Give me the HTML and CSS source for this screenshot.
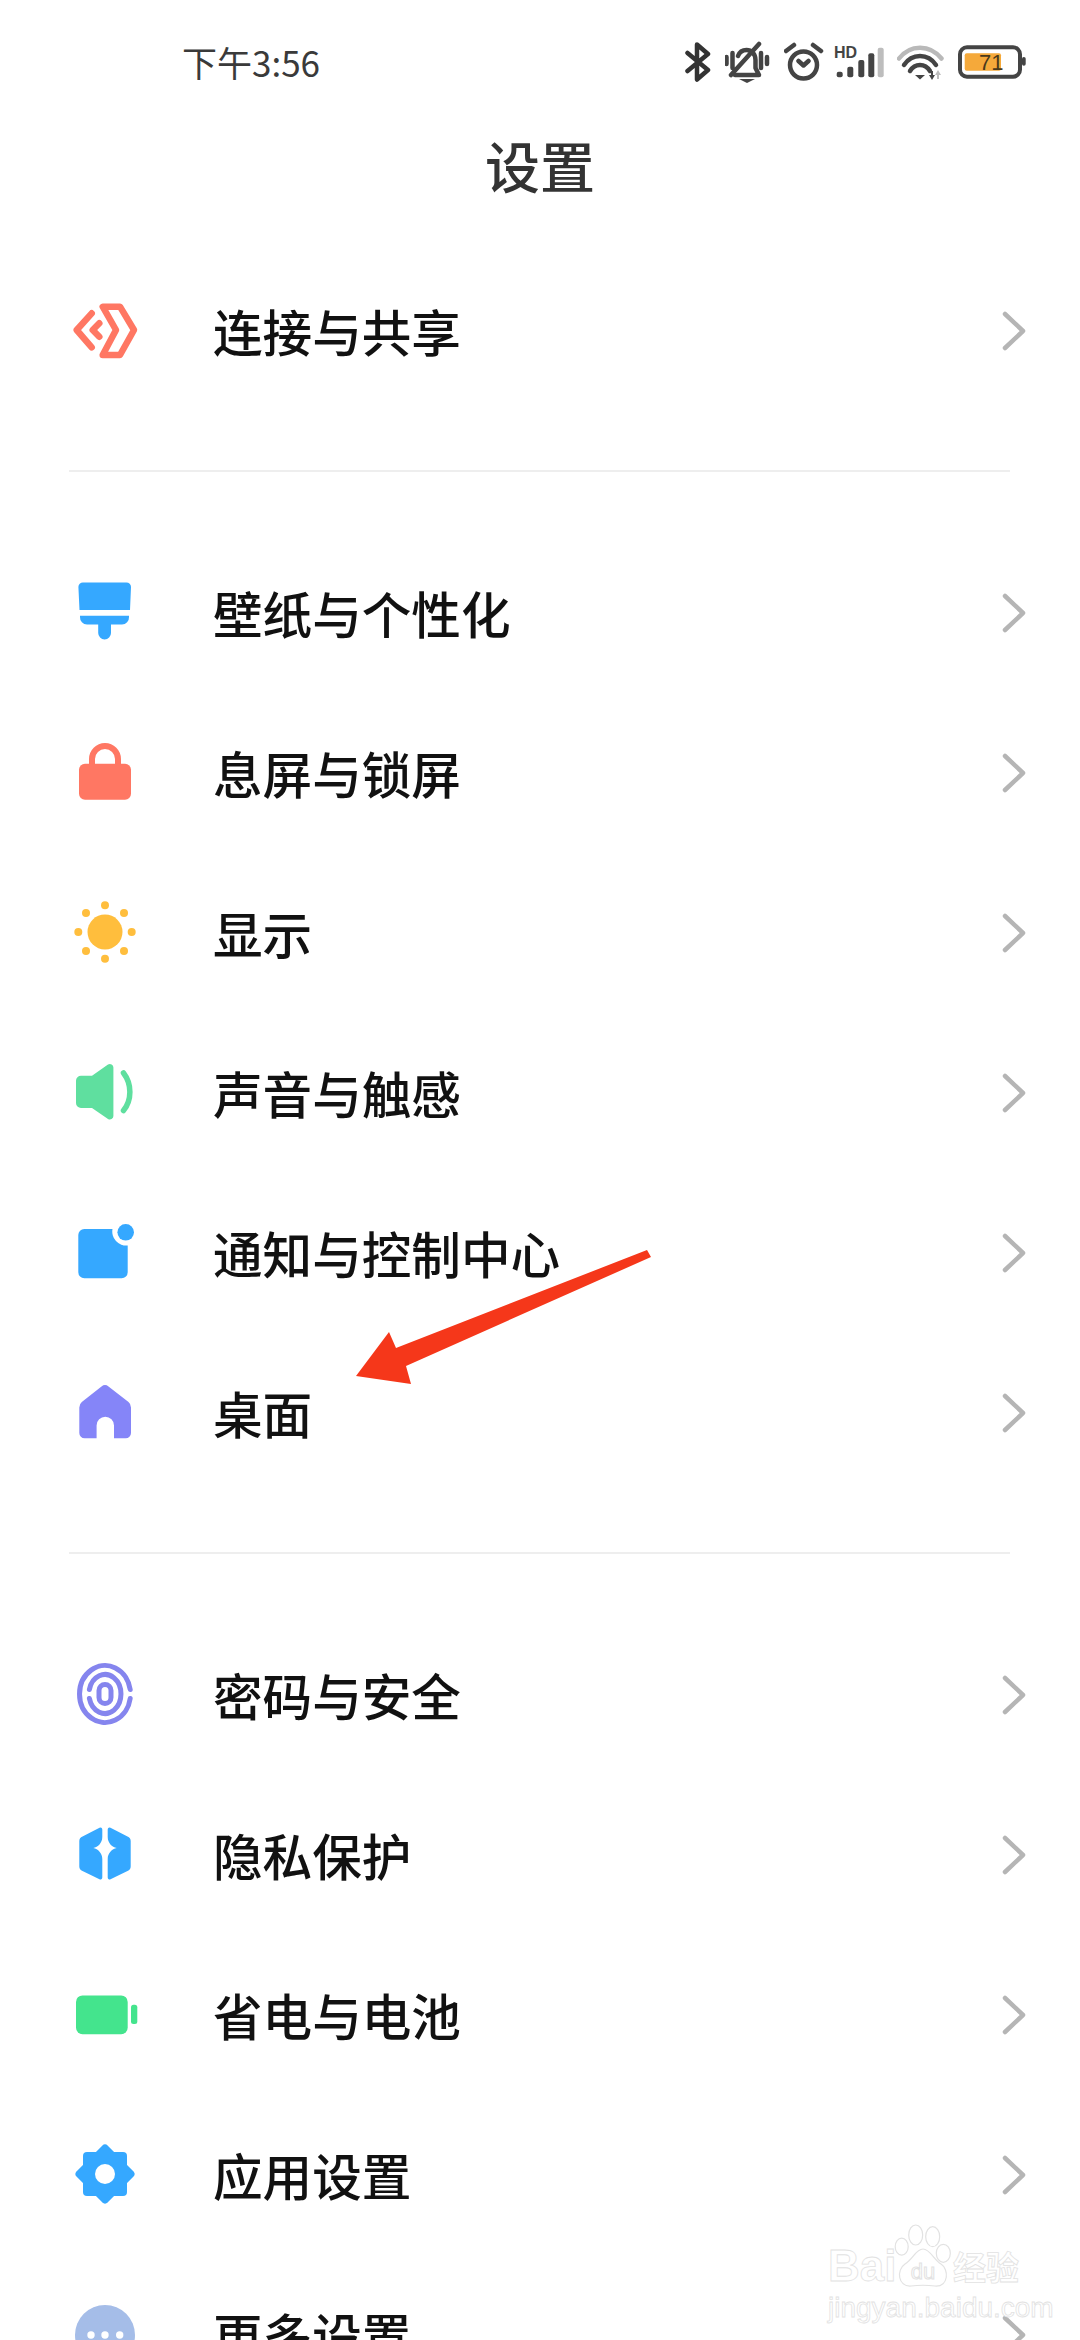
FILE: index.html
```html
<!DOCTYPE html>
<html lang="zh-CN">
<head>
  <meta charset="UTF-8" />
  <meta name="viewport" content="width=device-width,initial-scale=1.0" />
  <title>设置</title>
  <link rel="stylesheet" href="styles.css">
</head>
<body>
  <div class="phone">
    <!-- status bar -->
    <div class="status-bar">
      <span class="time">下午3:56</span>
      <div class="status-icons">
        <svg class="st st-bt" viewBox="0 0 30 44"><path class="ln" d="M2.500 13L23 30 12 39.500V4.500L23 14 2.500 31"/></svg>
        <svg class="st st-bell" viewBox="0 0 49 44">
          <path class="ln3" d="M1.500 17v7M7.500 13v15M36 13v15M42 17v7M34 4L6 35"/>
          <path class="ln3" d="M10 35h24l-3.500-7v-8c0-6-4-10-9-10-4 0-7 2-8.500 6"/>
          <path class="fl" d="M14 39h16l-8 4z"/>
        </svg>
        <svg class="st st-alarm" viewBox="0 0 40 44">
          <circle class="ln3" cx="19.500" cy="25" r="13.500"/>
          <path class="ln3" d="M2 11l8-6M29 5l8 6M14.500 21l5 4.500 5-4.500"/>
        </svg>
        <svg class="st st-signal" viewBox="0 0 53 44">
          <text class="hd" x="0" y="18">HD</text>
          <rect class="fl" x="2.700" y="31.700" width="6" height="5.600" rx="2"/>
          <rect class="fl" x="13.300" y="26.700" width="6" height="10.600" rx="2"/>
          <rect class="fl" x="24.300" y="20" width="6" height="17.300" rx="2"/>
          <rect class="fl" x="34.300" y="13.300" width="6" height="24" rx="2"/>
          <rect class="fl-off" x="43.700" y="7.700" width="6" height="29.600" rx="2"/>
        </svg>
        <svg class="st st-wifi" viewBox="0 0 51 44">
          <path class="ln-off" d="M2 18.500C13 4 33 4 44.500 18.500"/>
          <path class="ln3" d="M7 25C15 13 31 13 39 25M13 31C18 23 28 23 33 31"/>
          <path class="fl" d="M18 35h10l-5 4.500z"/>
          <path class="fl" d="M34 31h2v4h2l-3 5-3-5h2z"/>
          <path class="fl-off" d="M40 39v-4h-2l3-5 3 5h-2v4z"/>
        </svg>
        <svg class="st st-batt" viewBox="0 0 70 44">
          <rect class="batt-box" x="2" y="7.300" width="60" height="29.400" rx="7"/>
          <rect class="batt-lvl" x="6.700" y="13.300" width="36.300" height="17.400" rx="2"/>
          <rect class="fl" x="64" y="17" width="3.700" height="8.700" rx="1.800"/>
          <text class="batt-num" x="21" y="30">71</text>
        </svg>
      </div>
    </div>

    <h1 class="page-title">设置</h1>

    <div class="list">
      <div class="group">
        <div class="row">
          <svg class="ico" viewBox="0 0 80 80">
            <path class="s-coral" d="M26.700 22.300L11.700 39l15 17.300M34.300 32.300L27.700 39l6.600 6.700"/>
            <path class="s-coral" d="M37.700 15.700H55L69 39 55 64H37.700L51 39z"/>
          </svg>
          <span class="label">连接与共享</span>
          <svg class="chev" viewBox="0 0 24 40"><path d="M3 3l18 17L3 37"/></svg>
        </div>
      </div>
      <div class="divider"></div>
      <div class="group">
        <div class="row">
          <svg class="ico" viewBox="0 0 80 80">
            <path class="blue" d="M18 9.400H61.500a4.500 4.500 0 0 1 4.500 4.600L65 37H14.500L13.400 14a4.500 4.500 0 0 1 4.600-4.600z"/>
            <path class="blue" d="M15 42.700H64V44a7 7 0 0 1-7 7.400H46V60a6.400 6.400 0 0 1-12.800 0V51.400H22a7 7 0 0 1-7-7.400z"/>
          </svg>
          <span class="label">壁纸与个性化</span>
          <svg class="chev" viewBox="0 0 24 40"><path d="M3 3l18 17L3 37"/></svg>
        </div>
        <div class="row">
          <svg class="ico" viewBox="0 0 80 80">
            <path class="shackle" d="M27 33V26a13 13 0 0 1 26 0V33"/>
            <rect class="coral" x="14" y="30.700" width="52" height="36" rx="6"/>
          </svg>
          <span class="label">息屏与锁屏</span>
          <svg class="chev" viewBox="0 0 24 40"><path d="M3 3l18 17L3 37"/></svg>
        </div>
        <div class="row">
          <svg class="ico" viewBox="0 0 80 80">
            <g class="sun">
              <circle cx="40" cy="39" r="17.500"/>
              <circle cx="40" cy="12.300" r="4"/><circle cx="40" cy="65.700" r="4"/>
              <circle cx="13.300" cy="39" r="4"/><circle cx="66.700" cy="39" r="4"/>
              <circle cx="21" cy="20" r="4"/><circle cx="59" cy="20" r="4"/>
              <circle cx="21" cy="58" r="4"/><circle cx="59" cy="58" r="4"/>
            </g>
          </svg>
          <span class="label">显示</span>
          <svg class="chev" viewBox="0 0 24 40"><path d="M3 3l18 17L3 37"/></svg>
        </div>
        <div class="row">
          <svg class="ico" viewBox="0 0 80 80">
            <path class="mint" d="M16 22.700H27L43 11.500a3.500 3.500 0 0 1 5.400 3V63a3.500 3.500 0 0 1-5.400 3L27 55H16a5 5 0 0 1-5-5V27.700a5 5 0 0 1 5-5z"/>
            <path class="s-mint" d="M58.500 20C67 31 67 47 58.500 57.500"/>
          </svg>
          <span class="label">声音与触感</span>
          <svg class="chev" viewBox="0 0 24 40"><path d="M3 3l18 17L3 37"/></svg>
        </div>
        <div class="row">
          <svg class="ico" viewBox="0 0 80 80">
            <path class="blue" d="M19.300 16H47.500A14 14 0 0 0 62.700 32.500V59.300a6 6 0 0 1-6 6H19.300a6 6 0 0 1-6-6V22a6 6 0 0 1 6-6z"/>
            <circle class="blue" cx="60.700" cy="19.300" r="8.300"/>
          </svg>
          <span class="label">通知与控制中心</span>
          <svg class="chev" viewBox="0 0 24 40"><path d="M3 3l18 17L3 37"/></svg>
        </div>
        <div class="row">
          <svg class="ico" viewBox="0 0 80 80">
            <path class="violet" d="M36.500 13.500a5.500 5.500 0 0 1 7 0L63.500 29a7 7 0 0 1 2.500 5.500V60a5.300 5.300 0 0 1-5.300 5.300H49V52.500a8.700 8.700 0 0 0-17.400 0V65.300H19.600a5.300 5.300 0 0 1-5.300-5.300V34.500a7 7 0 0 1 2.500-5.500z"/>
          </svg>
          <span class="label">桌面</span>
          <svg class="chev" viewBox="0 0 24 40"><path d="M3 3l18 17L3 37"/></svg>
        </div>
      </div>
      <div class="divider"></div>
      <div class="group">
        <div class="row">
          <svg class="ico" viewBox="0 0 80 80">
            <g class="s-violet">
              <path d="M65.200 34.500A25.500 28.500 0 1 0 65.200 43.500"/>
              <path d="M24.400 34.500A16 19.500 0 1 1 24.400 43.500"/>
              <rect x="34" y="29.500" width="12" height="19" rx="6"/>
            </g>
          </svg>
          <span class="label">密码与安全</span>
          <svg class="chev" viewBox="0 0 24 40"><path d="M3 3l18 17L3 37"/></svg>
        </div>
        <div class="row">
          <svg class="ico" viewBox="0 0 80 80">
            <path class="blue" d="M34.500 12.700a2 2 0 0 1 2.800 1.800V22C37.300 28 33 32 28.300 33 33 34 37.300 38 37.300 44V62.500a2 2 0 0 1-2.800 1.800L17.500 56a5 5 0 0 1-3.200-4.600V26a5 5 0 0 1 3.200-4.600z"/>
            <path class="blue" d="M45.500 12.700a2 2 0 0 0-2.800 1.800V22C42.700 28 47 32 51.700 33 47 34 42.700 38 42.700 44V62.500a2 2 0 0 0 2.800 1.800L62.500 56a5 5 0 0 0 3.200-4.600V26a5 5 0 0 0-3.200-4.600z"/>
          </svg>
          <span class="label">隐私保护</span>
          <svg class="chev" viewBox="0 0 24 40"><path d="M3 3l18 17L3 37"/></svg>
        </div>
        <div class="row">
          <svg class="ico" viewBox="0 0 80 80">
            <rect class="green" x="11" y="20.400" width="51.700" height="38.800" rx="6.500"/>
            <rect class="green" x="66" y="29.700" width="6.300" height="19.300" rx="2.500"/>
          </svg>
          <span class="label">省电与电池</span>
          <svg class="chev" viewBox="0 0 24 40"><path d="M3 3l18 17L3 37"/></svg>
        </div>
        <div class="row">
          <svg class="ico" viewBox="0 0 80 80">
            <rect class="blue" x="18" y="17" width="44" height="44" rx="4"/>
            <rect class="blue" x="18" y="17" width="44" height="44" rx="4" transform="rotate(45 40 39)"/>
            <circle class="hole" cx="40" cy="39" r="10"/>
          </svg>
          <span class="label">应用设置</span>
          <svg class="chev" viewBox="0 0 24 40"><path d="M3 3l18 17L3 37"/></svg>
        </div>
        <div class="row">
          <svg class="ico" viewBox="0 0 80 80">
            <circle class="grey-blue" cx="40" cy="40" r="30"/>
            <circle class="hole" cx="26" cy="40" r="3.700"/>
            <circle class="hole" cx="40" cy="40" r="3.700"/>
            <circle class="hole" cx="54.700" cy="40" r="3.700"/>
          </svg>
          <span class="label">更多设置</span>
          <svg class="chev" viewBox="0 0 24 40"><path d="M3 3l18 17L3 37"/></svg>
        </div>
      </div>
    </div>

    <!-- annotation arrow drawn over the list -->
    <svg class="arrow" viewBox="0 0 300 140">
      <path d="M291 0L295 7 50 116 55 134 0 126 33 82 40 98z"/>
    </svg>

    <!-- watermark -->
    <div class="watermark">
      <div class="wm-top">
        <span class="wm-bai">Bai</span>
        <svg class="wm-paw" viewBox="0 0 60 68">
          <ellipse cx="8.700" cy="24.700" rx="6.500" ry="8.500"/>
          <ellipse cx="22.700" cy="13" rx="7" ry="10"/>
          <ellipse cx="39.700" cy="14.700" rx="7" ry="10"/>
          <ellipse cx="50.300" cy="31.300" rx="7" ry="9"/>
          <path d="M30 27C37 27 41 38 48 42 56 47 56 65 42 64 34 63 26 63 18 64 5 65 3 48 12 42 20 37 23 27 30 27z"/>
          <text x="30" y="57">du</text>
        </svg>
        <span class="wm-jy">经验</span>
      </div>
      <div class="wm-url">jingyan.baidu.com</div>
    </div>
  </div>
</body>
</html>
```

FILE: styles.css
```css
html,body{margin:0;width:1080px;height:2340px;overflow:hidden;background:#fff}
body {
  font-family: "Noto Sans CJK SC", "Noto Sans", sans-serif;
}
.phone {
  position: relative;
  width: 1080px;
  height: 2340px;
  overflow: hidden;
  background: #fff;
}

/* Status bar */
.status-bar {
  height: 124px;
  display: flex;
  align-items: center;
  justify-content: space-between;
  padding: 0 52px 0 182px;
}
.time {
  font-size: 35px;
  color: #3a3a3a;
  margin-bottom: 2px;
}
.status-icons {
  display: flex;
  align-items: center;
  gap: 10px;
}
.st { height: 44px; display: block; }
.st-bt { width: 30px; }
.st-bell { width: 49px; }
.st-alarm { width: 40px; }
.st-signal { width: 53px; }
.st-wifi { width: 51px; }
.st-batt { width: 70px; }
.ln { fill: none; stroke: #333; stroke-width: 4.5; stroke-linecap: round; stroke-linejoin: round; }
.ln3 { fill: none; stroke: #444; stroke-width: 4.5; stroke-linecap: round; stroke-linejoin: round; }
.ln-off { fill: none; stroke: #b9b9b9; stroke-width: 4.5; stroke-linecap: round; }
.fl { fill: #444; }
.fl-off { fill: #bdbdbd; }
.hd { font: bold 16px "Liberation Sans", sans-serif; fill: #444; }
.batt-box { fill: none; stroke: #444; stroke-width: 4; }
.batt-lvl { fill: #f5a93a; }
.batt-num { font: 22px "Liberation Sans", sans-serif; fill: #4a3a1a; }

/* Title */
.page-title {
  margin: 0;
  height: 80px;
  line-height: 80px;
  text-align: center;
  font-size: 55px;
  font-weight: 500;
  color: #333;
}

/* Settings list */
.list {
  margin-top: 47px;
}
.row {
  height: 160px;
  display: flex;
  align-items: center;
  padding: 0 54px 0 65px;
}
.ico {
  width: 80px;
  height: 80px;
  margin-right: 68px;
  flex: none;
}
.label {
  flex: 1;
  font-size: 49.6px;
  line-height: 60px;
  margin-bottom: 3px;
  font-weight: 500;
  color: #111;
  white-space: nowrap;
}
.chev {
  width: 24px;
  height: 40px;
  flex: none;
}
.chev path {
  fill: none;
  stroke: #b5b5b5;
  stroke-width: 4.5;
  stroke-linecap: round;
  stroke-linejoin: round;
}
.divider {
  height: 2px;
  margin: 59px 70px 61px 69px;
  background: #eeeeee;
}

/* Icon colours */
.blue { fill: #35a8ff; }
.coral { fill: #ff7763; }
.mint { fill: #5fdf9f; }
.violet { fill: #8585f8; }
.green { fill: #44e48d; }
.grey-blue { fill: #a5bde8; }
.hole { fill: #fff; }
.sun { fill: #ffbe3d; }
.shackle { fill: none; stroke: #ff7763; stroke-width: 6; }
.s-coral { fill: none; stroke: #ff7763; stroke-width: 6.5; stroke-linecap: round; stroke-linejoin: round; }
.s-mint { fill: none; stroke: #5fdf9f; stroke-width: 5.5; stroke-linecap: round; }
.s-violet { fill: none; stroke: #8585ee; stroke-width: 5; stroke-linecap: round; }

/* Arrow overlay */
.arrow {
  position: absolute;
  left: 356px;
  top: 1250px;
  width: 300px;
  height: 140px;
}
.arrow path { fill: #f5371a; }

/* Watermark overlay */
.watermark {
  position: absolute;
  left: 828px;
  top: 2222px;
  width: 200px;
  color: #fff;
  -webkit-text-stroke: 0.8px #e2e2e2;
  font-family: "Liberation Sans", sans-serif;
}
.wm-top {
  display: flex;
  align-items: flex-end;
  height: 68px;
}
.wm-bai {
  font-size: 44px;
  font-weight: bold;
  line-height: 48px;
  width: 65px;
  flex: none;
}
.wm-paw {
  width: 60px;
  height: 68px;
  flex: none;
}
.wm-paw ellipse, .wm-paw path {
  fill: #fff;
  stroke: #e2e2e2;
  stroke-width: 1.2;
}
.wm-paw text {
  font-size: 22px;
  text-anchor: middle;
  fill: #fff;
  stroke: #e2e2e2;
  stroke-width: 1;
}
.wm-jy {
  font-family: "Noto Sans CJK SC", sans-serif;
  font-size: 33px;
  font-weight: bold;
  line-height: 48px;
  flex: none;
}
.wm-url {
  font-size: 28px;
  line-height: 30px;
  white-space: nowrap;
  margin-top: 3px;
}
```
